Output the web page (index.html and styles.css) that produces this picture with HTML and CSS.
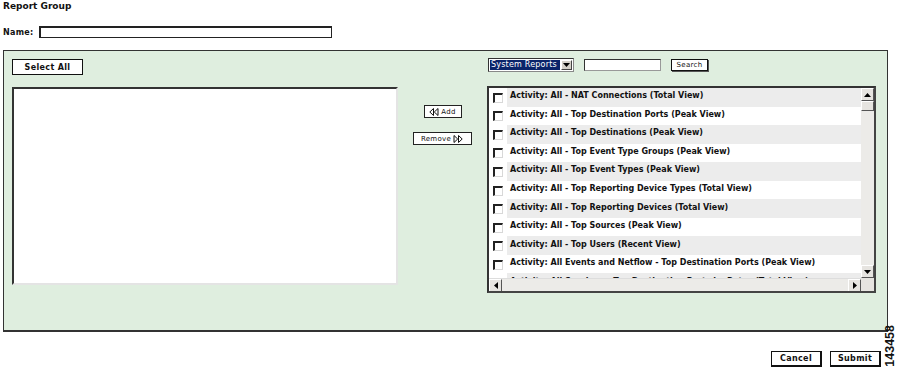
FILE: index.html
```html
<!DOCTYPE html>
<html>
<head>
<meta charset="utf-8">
<link rel="stylesheet" href="styles.css">
</head>
<body>
<div class="page">
  <div class="title">Report Group</div>
  <div class="name-row">
    <span class="label">Name:</span>
    <span class="name-input"></span>
  </div>
  <div class="panel">
    <div class="col-left">
      <span class="btn btn-select">Select All</span>
      <div class="left-box"></div>
    </div>
    <div class="col-mid">
      <span class="sbtn btn-add"><svg width="10" height="8" viewBox="0 0 10 8"><path d="M4.5 0.5 L0.8 4 L4.5 7.5 Z M9 0.5 L5.3 4 L9 7.5 Z" fill="none" stroke="#111" stroke-width="1"/></svg>Add</span>
      <span class="sbtn btn-remove">Remove<svg width="10" height="8" viewBox="0 0 10 8"><path d="M1 0.5 L4.7 4 L1 7.5 Z M5.5 0.5 L9.2 4 L5.5 7.5 Z" fill="none" stroke="#111" stroke-width="1"/></svg></span>
    </div>
    <div class="col-right">
      <div class="toolbar">
        <span class="select"><span class="select-text">System Reports</span><span class="select-arrow"><svg width="7" height="4" viewBox="0 0 7 4"><path d="M0 0 H7 L3.5 4 Z" fill="#000"/></svg></span></span>
        <span class="search-input"></span>
        <span class="sbtn btn-search">Search</span>
      </div>
      <div class="list-box">
        <div class="list-rows">
          <div class="row shade"><span class="cb-cell"><span class="cb"></span></span><span class="txt">Activity: All - NAT Connections (Total View)</span></div>
          <div class="row"><span class="cb-cell"><span class="cb"></span></span><span class="txt">Activity: All - Top Destination Ports (Peak View)</span></div>
          <div class="row shade"><span class="cb-cell"><span class="cb"></span></span><span class="txt">Activity: All - Top Destinations (Peak View)</span></div>
          <div class="row"><span class="cb-cell"><span class="cb"></span></span><span class="txt">Activity: All - Top Event Type Groups (Peak View)</span></div>
          <div class="row shade"><span class="cb-cell"><span class="cb"></span></span><span class="txt">Activity: All - Top Event Types (Peak View)</span></div>
          <div class="row"><span class="cb-cell"><span class="cb"></span></span><span class="txt">Activity: All - Top Reporting Device Types (Total View)</span></div>
          <div class="row shade"><span class="cb-cell"><span class="cb"></span></span><span class="txt">Activity: All - Top Reporting Devices (Total View)</span></div>
          <div class="row"><span class="cb-cell"><span class="cb"></span></span><span class="txt">Activity: All - Top Sources (Peak View)</span></div>
          <div class="row shade"><span class="cb-cell"><span class="cb"></span></span><span class="txt">Activity: All - Top Users (Recent View)</span></div>
          <div class="row"><span class="cb-cell"><span class="cb"></span></span><span class="txt">Activity: All Events and Netflow - Top Destination Ports (Peak View)</span></div>
          <div class="row shade"><span class="cb-cell"><span class="cb"></span></span><span class="txt">Activity: All Sessions - Top Destination Ports by Bytes (Total View)</span></div>
        </div>
        <div class="vscroll">
          <span class="arrow"><svg width="7" height="4" viewBox="0 0 7 4"><path d="M0 4 H7 L3.5 0 Z" fill="#000"/></svg></span>
          <span class="thumb"></span>
          <span class="track"></span>
          <span class="arrow"><svg width="7" height="4" viewBox="0 0 7 4"><path d="M0 0 H7 L3.5 4 Z" fill="#000"/></svg></span>
        </div>
        <div class="hscroll">
          <span class="arrow"><svg width="4" height="7" viewBox="0 0 4 7"><path d="M4 0 V7 L0 3.5 Z" fill="#000"/></svg></span>
          <span class="htrack"></span>
          <span class="arrow"><svg width="4" height="7" viewBox="0 0 4 7"><path d="M0 0 V7 L4 3.5 Z" fill="#000"/></svg></span>
        </div>
        <div class="corner"></div>
      </div>
    </div>
  </div>
  <div class="actions">
    <span class="btn btn-big">Cancel</span>
    <span class="btn btn-big">Submit</span>
  </div>
  <div class="fig-id">143458</div>
</div>
</body>
</html>
```
FILE: styles.css
```css
html, body {
  margin: 0;
  padding: 0;
  background: #fff;
}
body {
  font-family: "DejaVu Sans", Verdana, sans-serif;
  color: #111;
}
.page {
  position: relative;
  width: 900px;
  height: 370px;
  overflow: hidden;
}
.title {
  font-weight: bold;
  font-size: 9px;
  line-height: 12px;
  padding: 0 0 0 3px;
  height: 12px;
}
.name-row {
  display: flex;
  align-items: center;
  padding: 14px 0 0 3px;
  height: 12px;
}
.label {
  font-weight: bold;
  font-size: 8px;
  letter-spacing: 0.3px;
  width: 36px;
}
.name-input {
  display: block;
  width: 290px;
  height: 9px;
  border: 1px solid #222;
  border-top-width: 2px;
  border-left-width: 2px;
  background: #fff;
}
.panel {
  margin: 12px 0 0 3px;
  width: 875px;
  height: 279px;
  background: #dfeedf;
  border: 1px solid #333;
  border-bottom-width: 2px;
  display: grid;
  grid-template-columns: 385px 90px 388px;
  padding: 0 0 0 8px;
  box-sizing: content-box;
}
.col-left {
  padding-top: 8px;
  display: flex;
  flex-direction: column;
}
.btn {
  display: inline-flex;
  align-items: center;
  justify-content: center;
  background: #fff;
  border: 1px solid #111;
  font-weight: bold;
  font-size: 8px;
  letter-spacing: 0.35px;
  box-sizing: border-box;
}
.btn-select {
  width: 71px;
  height: 16px;
}
.left-box {
  margin-top: 12px;
  width: 386px;
  height: 198px;
  background: #fff;
  border-top: 2px solid #333;
  border-left: 2px solid #333;
  border-right: 2px solid #e4e4e4;
  border-bottom: 2px solid #e4e4e4;
  box-sizing: border-box;
}
.col-mid {
  display: flex;
  flex-direction: column;
  align-items: center;
  padding-top: 54px;
  gap: 14px;
}
.sbtn {
  display: inline-flex;
  align-items: center;
  justify-content: center;
  gap: 2px;
  background: #fff;
  border: 1px solid #222;
  font-size: 7px;
  letter-spacing: 0.3px;
  box-sizing: border-box;
  height: 13px;
}
.btn-add {
  width: 38px;
  margin-left: 1px;
}
.btn-remove {
  width: 59px;
}
.col-right {
  display: flex;
  flex-direction: column;
  padding-top: 7px;
}
.toolbar {
  display: flex;
  align-items: center;
  height: 14px;
  padding-left: 1px;
}
.select {
  display: inline-flex;
  align-items: center;
  height: 14px;
  border: 1px solid #888;
  border-top-color: #333;
  border-left-color: #333;
  background: #fff;
  box-sizing: border-box;
  width: 86px;
  padding: 1px;
}
.select-text {
  background: #0a246a;
  color: #fff;
  font-size: 8px;
  letter-spacing: 0.2px;
  line-height: 10px;
  height: 10px;
  padding: 0 1px;
  flex: 1;
  white-space: nowrap;
  overflow: hidden;
}
.select-arrow {
  width: 11px;
  height: 10px;
  background: #d4d0c8;
  border: 1px solid #fff;
  border-right-color: #444;
  border-bottom-color: #444;
  box-sizing: border-box;
  display: flex;
  align-items: center;
  justify-content: center;
  margin-left: 1px;
}
.search-input {
  display: block;
  width: 77px;
  height: 12px;
  margin-left: 10px;
  background: #fff;
  border: 1px solid #333;
  border-right-color: #999;
  border-bottom-color: #999;
  box-sizing: border-box;
}
.btn-search {
  width: 37px;
  height: 12px;
  margin-left: 10px;
  border-color: #111;
  font-size: 7px;
  box-shadow: 1px 1px 0 #555;
}
.list-box {
  margin-top: 14px;
  width: 389px;
  height: 207px;
  background: #fff;
  border-top: 2px solid #333;
  border-left: 2px solid #333;
  border-right: 2px solid #444;
  border-bottom: 2px solid #444;
  box-sizing: border-box;
  display: grid;
  grid-template-columns: 1fr 13px;
  grid-template-rows: 1fr 13px;
  overflow: hidden;
}
.list-rows {
  overflow: hidden;
}
.row {
  display: flex;
  align-items: center;
  height: 18.56px;
  font-size: 8px;
  font-weight: bold;
  white-space: nowrap;
}
.cb-cell {
  width: 18px;
  height: 100%;
  display: flex;
  align-items: center;
  justify-content: center;
  background: #fff;
  flex: none;
  padding-top: 1px;
  box-sizing: border-box;
}
.cb {
  width: 10px;
  height: 10px;
  box-sizing: border-box;
  background: #fff;
  border-top: 2px solid #222;
  border-left: 2px solid #222;
  border-right: 1px solid #d8d8d8;
  border-bottom: 1px solid #d8d8d8;
}
.txt {
  flex: 1;
  height: 100%;
  display: flex;
  align-items: center;
  padding: 0 0 3px 3px;
  box-sizing: border-box;
}
.row.shade .txt {
  background: #ececec;
}
.vscroll {
  display: flex;
  flex-direction: column;
  background: #e6e4e0;
}
.arrow {
  flex: none;
  width: 13px;
  height: 13px;
  box-sizing: border-box;
  background: #e6e4e0;
  border: 1px solid #fff;
  border-right-color: #555;
  border-bottom-color: #555;
  display: flex;
  align-items: center;
  justify-content: center;
}
.thumb {
  flex: none;
  height: 8px;
  background: #e6e4e0;
  border: 1px solid #fff;
  border-right-color: #555;
  border-bottom-color: #555;
}
.track {
  flex: 1;
  background: #ecebe8;
}
.hscroll {
  display: flex;
  background: #ecebe8;
  border-top: 1px solid #ddd;
}
.htrack {
  flex: 1;
}
.corner {
  background: #e6e4e0;
}
.actions {
  display: flex;
  justify-content: flex-end;
  gap: 8px;
  padding: 19px 19px 0 0;
}
.btn-big {
  width: 51px;
  height: 16px;
  border: 1px solid #111;
  border-right-width: 2px;
  border-bottom-width: 2px;
  font-size: 8px;
}
.fig-id {
  position: absolute;
  left: 884px;
  top: 325px;
  writing-mode: vertical-rl;
  transform: rotate(180deg);
  font-weight: bold;
  font-size: 12.5px;
  line-height: 12px;
  font-family: "Liberation Sans", Arial, sans-serif;
}
```
